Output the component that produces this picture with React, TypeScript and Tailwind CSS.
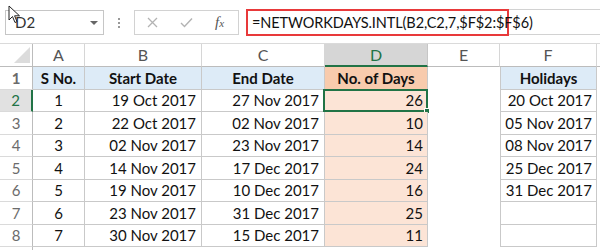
import { ReactNode } from "react";

type Row = {
  n: number;
  start: string;
  end: string;
  days: number;
  holiday: string;
};

const rows: Row[] = [
  { n: 1, start: "19 Oct 2017", end: "27 Nov 2017", days: 26, holiday: "20 Oct 2017" },
  { n: 2, start: "22 Oct 2017", end: "02 Nov 2017", days: 10, holiday: "05 Nov 2017" },
  { n: 3, start: "02 Nov 2017", end: "23 Nov 2017", days: 14, holiday: "08 Nov 2017" },
  { n: 4, start: "14 Nov 2017", end: "17 Dec 2017", days: 24, holiday: "25 Dec 2017" },
  { n: 5, start: "19 Nov 2017", end: "10 Dec 2017", days: 16, holiday: "31 Dec 2017" },
  { n: 6, start: "23 Nov 2017", end: "31 Dec 2017", days: 25, holiday: "" },
  { n: 7, start: "30 Nov 2017", end: "15 Dec 2017", days: 11, holiday: "" },
];

const line = "border-[#c9c9c9]";

function Cell({ w, className = "", children }: { w: string; className?: string; children?: ReactNode }) {
  return (
    <div className={`${w} shrink-0 h-full flex items-center overflow-hidden whitespace-nowrap ${className}`}>
      {children}
    </div>
  );
}

function RowHeader({ n, active }: { n: number; active?: boolean }) {
  return (
    <Cell
      w="w-[33px]"
      className={`justify-center border-b border-[#dadada] text-[15px] ${
        active
          ? "bg-[#e1e1e1] text-[#217346] border-r-2 border-r-[#217346]"
          : "text-[#6b6b6b] border-r border-r-[#bcbcbc]"
      }`}
    >
      {n}
    </Cell>
  );
}

// mouse arrow resting over the name box
function Pointer() {
  return (
    <svg className="absolute z-10 left-[8px] top-[5px]" width="13" height="19" viewBox="0 0 13 19">
      <path d="M1 1 L1 15 L4.5 11.5 L7 17.5 L9 16.6 L6.6 10.8 L11.5 10.8 Z" fill="#fff" stroke="#222" strokeWidth="1" strokeLinejoin="round" />
    </svg>
  );
}

export default function App() {
  return (
    <div className="w-[600px] h-[250px] bg-white overflow-hidden font-['Lato','Liberation_Sans',sans-serif] text-[#111]">
      {/* formula bar */}
      <div className="relative h-[43px] pt-[10px] flex items-start">
        <div className="ml-[5px] w-[99px] h-[25px] border border-[#c6c6c6] flex items-center justify-between pl-[9px] pr-[5px] text-[15px] text-[#333]">
          <span>D2</span>
          <span className="w-0 h-0 border-x-[4px] border-x-transparent border-t-[4px] border-t-[#666]" />
        </div>
        <div className="w-[30px] h-[25px] flex flex-col items-center justify-center gap-[2px]">
          <span className="w-[2px] h-[2px] bg-[#999]" />
          <span className="w-[2px] h-[2px] bg-[#999]" />
          <span className="w-[2px] h-[2px] bg-[#999]" />
        </div>
        <div className="w-[105px] h-[25px] border border-[#d2d2d2] flex items-center text-[#b0b0b0]">
          <svg className="ml-[12px]" width="11" height="11" viewBox="0 0 11 11">
            <path d="M1 1 L10 10 M10 1 L1 10" stroke="#b3b3b3" strokeWidth="1.3" />
          </svg>
          <svg className="ml-[22px]" width="13" height="11" viewBox="0 0 13 11">
            <path d="M1 6 L4.5 9.5 L12 1.5" stroke="#b3b3b3" strokeWidth="1.4" fill="none" />
          </svg>
          <span className="ml-[22px] font-['Liberation_Serif',serif] italic text-[15px] text-[#555]">
            f<span className="text-[11px]">x</span>
          </span>
        </div>
        <div className="ml-[7px] flex-1 h-[26px] -mt-[1px] border-y border-l border-[#d2d2d2] flex">
          <div className="w-[263px] h-[27px] -mt-[1px] -ml-[1px] border-2 border-[#e8393a] flex items-center pl-[4px] text-[14.5px] tracking-[-0.1px] text-[#111]">
            =NETWORKDAYS.INTL(B2,C2,7,$F$2:$F$6)
          </div>
        </div>
        <Pointer />
      </div>

      {/* column letters */}
      <div className="h-[24px] flex border-t border-[#dadada] text-[16px] text-[#555]">
        <Cell w="w-[33px]" className="relative border-r border-b border-[#bcbcbc]">
          <span className="absolute right-[2px] bottom-[3px] w-0 h-0 border-l-[16px] border-l-transparent border-b-[16px] border-b-[#dcdcdc]" />
        </Cell>
        <Cell w="w-[52px]" className="justify-center border-r border-b border-[#d6d6d6] border-b-[#bcbcbc]">A</Cell>
        <Cell w="w-[117px]" className="justify-center border-r border-b border-[#d6d6d6] border-b-[#bcbcbc]">B</Cell>
        <Cell w="w-[123px]" className="justify-center border-r border-b border-[#d6d6d6] border-b-[#bcbcbc]">C</Cell>
        <Cell w="w-[103px]" className="justify-center bg-[#d6d6d6] text-[#217346] border-r border-r-[#c6c6c6] border-b-2 border-b-[#217346]">D</Cell>
        <Cell w="w-[72px]" className="justify-center border-r border-b border-[#d6d6d6] border-b-[#bcbcbc]">E</Cell>
        <Cell w="w-[97px]" className="justify-center border-r border-b border-[#d6d6d6] border-b-[#bcbcbc]">F</Cell>
        <Cell w="flex-1" className="border-b border-[#bcbcbc]" />
      </div>

      {/* header row */}
      <div className="h-[22.5px] flex text-[15px] font-bold">
        <RowHeader n={1} />
        <Cell w="w-[52px]" className={`justify-center bg-[#ddebf7] border-r border-b ${line}`}>S No.</Cell>
        <Cell w="w-[117px]" className={`justify-center bg-[#ddebf7] border-r border-b ${line}`}>Start Date</Cell>
        <Cell w="w-[123px]" className={`justify-center bg-[#ddebf7] border-r border-b ${line}`}>End Date</Cell>
        <Cell w="w-[103px]" className={`justify-center bg-[#f8cbad] border-r border-b ${line}`}>No. of Days</Cell>
        <Cell w="w-[72px]" />
        <Cell w="w-[97px]" className={`justify-center bg-[#ddebf7] border-x border-b ${line}`}>Holidays</Cell>
      </div>

      {rows.map((r, i) => (
        <div key={r.n} className="h-[22.5px] flex text-[15px]">
          <RowHeader n={i + 2} active={i === 0} />
          <Cell w="w-[52px]" className={`justify-center border-r border-b ${line}`}>{r.n}</Cell>
          <Cell w="w-[117px]" className={`justify-end pr-[5px] border-r border-b ${line}`}>{r.start}</Cell>
          <Cell w="w-[123px]" className={`justify-end pr-[5px] border-r border-b ${line}`}>{r.end}</Cell>
          <Cell w="w-[103px]" className={`relative overflow-visible justify-end pr-[4px] bg-[#fce4d6] border-r border-b ${line}`}>
            {r.days}
            {i === 0 && (
              <>
                <span className="absolute -left-[2px] -top-[1px] -right-[1px] -bottom-[1px] border-2 border-[#217346]" />
                <span className="absolute -right-[3px] -bottom-[3px] w-[6px] h-[6px] bg-[#217346] border border-white" />
              </>
            )}
          </Cell>
          <Cell w="w-[72px]" />
          <Cell w="w-[97px]" className={`justify-end pr-[4px] border-x border-b ${line}`}>{r.holiday}</Cell>
        </div>
      ))}

      <div className="h-[10px] flex">
        <Cell w="w-[33px]" className="border-r border-[#bcbcbc]" />
      </div>
    </div>
  );
}
